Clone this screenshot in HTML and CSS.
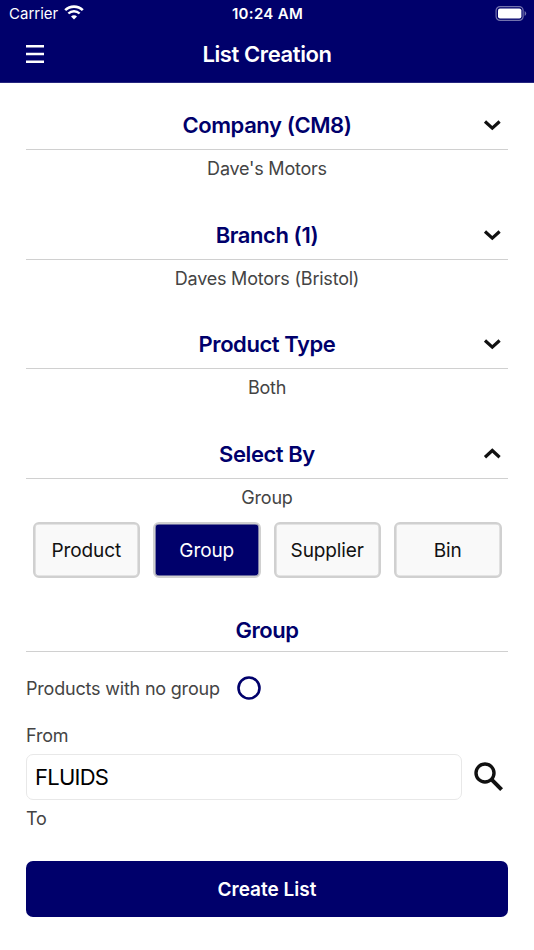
FILE: index.html
```html
<!DOCTYPE html>
<html lang="en">
<head>
    <meta charset="UTF-8">
    <title>List Creation</title>
    <link rel="stylesheet" href="styles.css">
</head>
<body>
    <!-- Header -->
    <header class="header">
        <div class="status-bar">
            <div class="status-left">
                <span class="carrier">Carrier</span>
                <svg class="wifi" width="20" height="15" viewBox="0 0 20 15">
                    <path d="M1.2 5.2 A12.5 12.5 0 0 1 18.8 5.2" fill="none" stroke="#fff" stroke-width="2.6"/>
                    <path d="M4.4 8.5 A8 8 0 0 1 15.6 8.5" fill="none" stroke="#fff" stroke-width="2.4"/>
                    <path d="M10 14.6 L7 11.6 A4.2 4.2 0 0 1 13 11.6 Z" fill="#fff"/>
                </svg>
            </div>
            <span class="time">10:24 AM</span>
            <div class="status-right">
                <svg width="32" height="15" viewBox="0 0 32 15">
                    <rect x="1.1" y="0.6" width="27" height="13.8" rx="4" fill="none" stroke="#7373ae" stroke-width="1.2"/>
                    <rect x="3" y="2.5" width="23.4" height="10" rx="2" fill="#fff"/>
                    <path d="M29.6 5.1 Q31.2 5.9 31.2 7.5 Q31.2 9.1 29.6 9.9 Z" fill="#7373ae"/>
                </svg>
            </div>
        </div>
        <div class="nav-bar">
            <button class="menu" aria-label="Menu">
                <svg width="18" height="20" viewBox="0 0 18 20">
                    <path d="M0 2.3 H18 M0 10 H18 M0 17.7 H18" stroke="#fff" stroke-width="2.6"/>
                </svg>
            </button>
            <h1>List Creation</h1>
        </div>
    </header>

    <main class="content">
        <section class="section">
            <div class="section-title">
                <h2>Company (CM8)</h2>
                <svg class="chevron" width="18" height="12" viewBox="0 0 18 12"><path d="M2 2.5 L9.3 9.2 L16.6 2.5"/></svg>
            </div>
            <p class="value">Dave's Motors</p>
        </section>

        <section class="section">
            <div class="section-title">
                <h2>Branch (1)</h2>
                <svg class="chevron" width="18" height="12" viewBox="0 0 18 12"><path d="M2 2.5 L9.3 9.2 L16.6 2.5"/></svg>
            </div>
            <p class="value">Daves Motors (Bristol)</p>
        </section>

        <section class="section">
            <div class="section-title">
                <h2>Product Type</h2>
                <svg class="chevron" width="18" height="12" viewBox="0 0 18 12"><path d="M2 2.5 L9.3 9.2 L16.6 2.5"/></svg>
            </div>
            <p class="value">Both</p>
        </section>

        <section class="section select-by">
            <div class="section-title">
                <h2>Select By</h2>
                <svg class="chevron" width="18" height="12" viewBox="0 0 18 12"><path d="M2 9.2 L9.3 2.5 L16.6 9.2"/></svg>
            </div>
            <p class="value">Group</p>
            <div class="options">
                <button class="option">Product</button>
                <button class="option active">Group</button>
                <button class="option">Supplier</button>
                <button class="option">Bin</button>
            </div>
        </section>

        <!-- Group range -->
        <section class="group-section">
            <div class="section-title group-title">
                <h2>Group</h2>
            </div>
            <label class="no-group">
                <span class="no-group-text">Products with no group</span>
                <svg class="radio" width="24" height="24" viewBox="0 0 24 24">
                    <circle cx="12" cy="12" r="10.5" fill="none" stroke="#00006b" stroke-width="2.6"/>
                </svg>
            </label>
            <label class="field-label" for="from">From</label>
            <div class="field">
                <input type="text" id="from" value="FLUIDS">
                <svg class="search" width="32" height="32" viewBox="0 0 32 32">
                    <circle cx="12" cy="12" r="9" fill="none" stroke="#111" stroke-width="3.4"/>
                    <path d="M18.2 18.2 L28.6 28.6" stroke="#111" stroke-width="4"/>
                </svg>
            </div>
            <span class="field-label to">To</span>
        </section>

        <button class="create">Create List</button>
    </main>
</body>
</html>
```

FILE: styles.css
```css
* {
    box-sizing: border-box;
}
body {
    margin: 0;
    background-color: #fff;
    font-family: Inter, "Liberation Sans", sans-serif;
    color: #444;
}
h1, h2, p {
    margin: 0;
}
button {
    font-family: inherit;
    padding: 0;
    cursor: pointer;
}
.header {
    height: 83px;
    background-color: #00006b;
    border-bottom: 1px solid #26267f;
    color: #fff;
}
.status-bar {
    display: grid;
    grid-template-columns: 1fr auto 1fr;
    align-items: center;
    height: 27px;
    padding: 0 8px 0 9px;
}
.status-left {
    display: flex;
    align-items: center;
    gap: 6px;
}
.carrier {
    font-size: 15px;
}
.wifi {
    margin-top: -2px;
}
.time {
    font-size: 15px;
    font-weight: 600;
    letter-spacing: 0.3px;
}
.status-right {
    display: flex;
    justify-content: flex-end;
    margin-right: -1px;
}
.nav-bar {
    display: grid;
    grid-template-columns: 60px 1fr 60px;
    align-items: center;
    height: 54px;
}
.menu {
    display: flex;
    width: 18px;
    margin-left: 26px;
    border: none;
    background: none;
}
h1 {
    font-size: 22px;
    font-weight: 600;
    letter-spacing: -0.4px;
    text-align: center;
}
.content {
    padding: 18px 26px 0;
}
.section {
    height: 109.67px;
}
.section-title {
    display: grid;
    grid-template-columns: 32px 1fr 32px;
    align-items: center;
    height: 49px;
    border-bottom: 1px solid #d0d0d0;
}
h2 {
    grid-column: 2;
    font-size: 22px;
    font-weight: 600;
    letter-spacing: -0.43px;
    line-height: 28px;
    text-align: center;
    color: #00006b;
}
.chevron {
    margin-left: 7px;
}
.chevron path {
    fill: none;
    stroke: #111;
    stroke-width: 3.2;
}
.value {
    font-size: 18px;
    letter-spacing: -0.22px;
    line-height: 37px;
    text-align: center;
}
.select-by {
    height: 179px;
}
.options {
    display: grid;
    grid-template-columns: repeat(4, 1fr);
    gap: 13px;
    margin-top: 6px;
    padding: 0 6.5px;
}
.option {
    height: 56px;
    padding-top: 2px;
    border: 2px solid #d0d0d0;
    border-radius: 6px;
    box-shadow: inset 0 0 0 0.6px #d0d0d0;
    background-color: #f9f9f9;
    font-size: 19px;
    letter-spacing: -0.1px;
    color: #111;
}
.option.active {
    background-color: #00006b;
    color: #fff;
}
.group-title {
    height: 43px;
}
.no-group {
    display: flex;
    align-items: center;
    gap: 17px;
    height: 73px;
}
.no-group-text {
    padding-top: 1px;
    font-size: 18px;
    letter-spacing: -0.2px;
}
.field-label {
    display: block;
    font-size: 18px;
    letter-spacing: -0.2px;
    line-height: 22px;
}
.field {
    display: flex;
    align-items: center;
    gap: 11px;
    margin-top: 7px;
}
.field input {
    width: 436px;
    height: 46px;
    padding: 0 8px;
    border: 1px solid #e8e8e8;
    border-radius: 7px;
    font-family: inherit;
    font-size: 22px;
    letter-spacing: -0.75px;
    color: #000;
}
.to {
    margin-top: 8px;
}
.create {
    display: block;
    width: 100%;
    height: 56px;
    margin-top: 31px;
    padding-top: 1px;
    border: none;
    border-radius: 7px;
    background-color: #00006b;
    font-size: 19px;
    font-weight: 600;
    color: #fff;
}
```
